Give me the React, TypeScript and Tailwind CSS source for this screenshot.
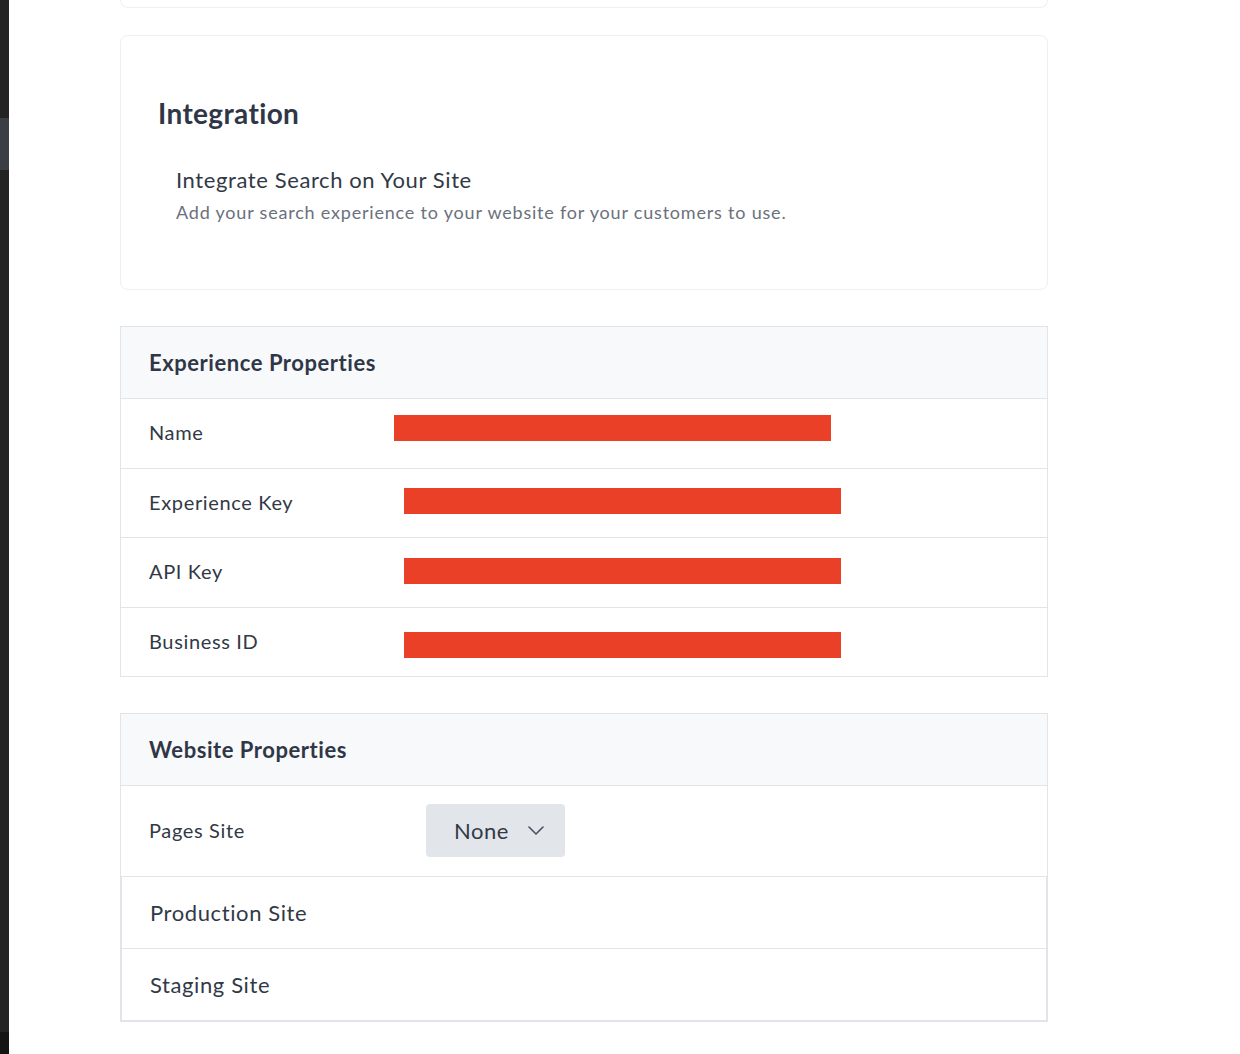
const font = { fontFamily: "Lato, 'Noto Sans', sans-serif" };

function Redacted({ offset }: { offset: string }) {
  return <div className={`h-[26px] w-[437px] bg-[#ea4027] ${offset}`} />;
}

function PropRow({ label, offset, height, shift }: { label: string; offset: string; height: string; shift: string }) {
  return (
    <div className={`flex items-center border-t border-[#e1e5ea] px-[28px] ${height}`}>
      <div className="-mt-[3px] w-[245px] text-[20px] tracking-[0.65px] text-[#323946]">{label}</div>
      <div className={shift}>
        <Redacted offset={offset} />
      </div>
    </div>
  );
}

function Chevron() {
  return (
    <svg width="16" height="9" viewBox="0 0 16 9" className="ml-[19px]" fill="none">
      <polyline points="1,1 8,8 15,1" stroke="#4a5160" strokeWidth="1.6" strokeLinecap="round" strokeLinejoin="round" />
    </svg>
  );
}

export default function App() {
  return (
    <div className="flex min-h-[1054px] bg-white" style={font}>
      {/* dark app rail, mostly cut off */}
      <div className="flex w-[9px] shrink-0 flex-col bg-[#232323]">
        <div className="h-[118px]" />
        <div className="h-[52px] bg-[#3b3e44]" />
        <div className="flex-1" />
        <div className="h-[22px] bg-[#141414]" />
      </div>

      <div className="ml-[111px] flex w-[928px] flex-col">
        <div className="h-[8px] rounded-b-lg border border-t-0 border-[#eeeff1]" />

        <section className="mt-[27px] rounded-lg border border-[#eeeff1] pb-[65px] pl-[37px] pt-[60px]">
          <h1 className="text-[28px] font-bold leading-[34px] tracking-[0.35px] text-[#2f3747]">Integration</h1>
          <div className="mt-[36px] pl-[18px]">
            <h2 className="text-[22px] leading-[28px] tracking-[0.6px] text-[#323946]">Integrate Search on Your Site</h2>
            <p className="mt-[6px] text-[18px] leading-[24px] tracking-[0.8px] text-[#6b717c]">
              Add your search experience to your website for your customers to use.
            </p>
          </div>
        </section>

        <section className="mt-[36px] border border-[#e1e5ea]">
          <div className="flex h-[71px] items-center bg-[#f8f9fb] px-[28px]">
            <h3 className="text-[22px] font-bold tracking-[0.55px] text-[#2f3747]">Experience Properties</h3>
          </div>
          <PropRow label="Name" offset="" height="h-[70px]" shift="-mt-[12px]" />
          <PropRow label="Experience Key" offset="ml-[10px]" height="h-[69px]" shift="-mt-[5px]" />
          <PropRow label="API Key" offset="ml-[10px]" height="h-[70px]" shift="-mt-[3px]" />
          <PropRow label="Business ID" offset="ml-[10px]" height="h-[69px]" shift="mt-[6px]" />
        </section>

        <section className="mt-[36px] border border-b-0 border-[#e1e5ea]">
          <div className="flex h-[71px] items-center bg-[#f8f9fb] px-[28px]">
            <h3 className="text-[22px] font-bold tracking-[0.55px] text-[#2f3747]">Website Properties</h3>
          </div>
          <div className="flex h-[91px] items-center border-t border-[#e1e5ea] px-[28px]">
            <div className="-mt-[2px] w-[277px] text-[20px] tracking-[0.65px] text-[#323946]">Pages Site</div>
            <button className="-mt-[2px] flex h-[53px] w-[139px] items-center rounded-[4px] bg-[#e2e5e9] pl-[28px] text-[22px] tracking-[0.5px] text-[#323946]">
              None
              <Chevron />
            </button>
          </div>
          <div className="border border-b-2 border-[#e1e5ea]">
            <div className="flex h-[71px] items-center px-[28px] text-[22px] tracking-[0.6px] text-[#323946]">Production Site</div>
            <div className="flex h-[72px] items-center border-t border-[#e1e5ea] px-[28px] text-[22px] tracking-[0.6px] text-[#323946]">
              Staging Site
            </div>
          </div>
        </section>
      </div>
    </div>
  );
}
